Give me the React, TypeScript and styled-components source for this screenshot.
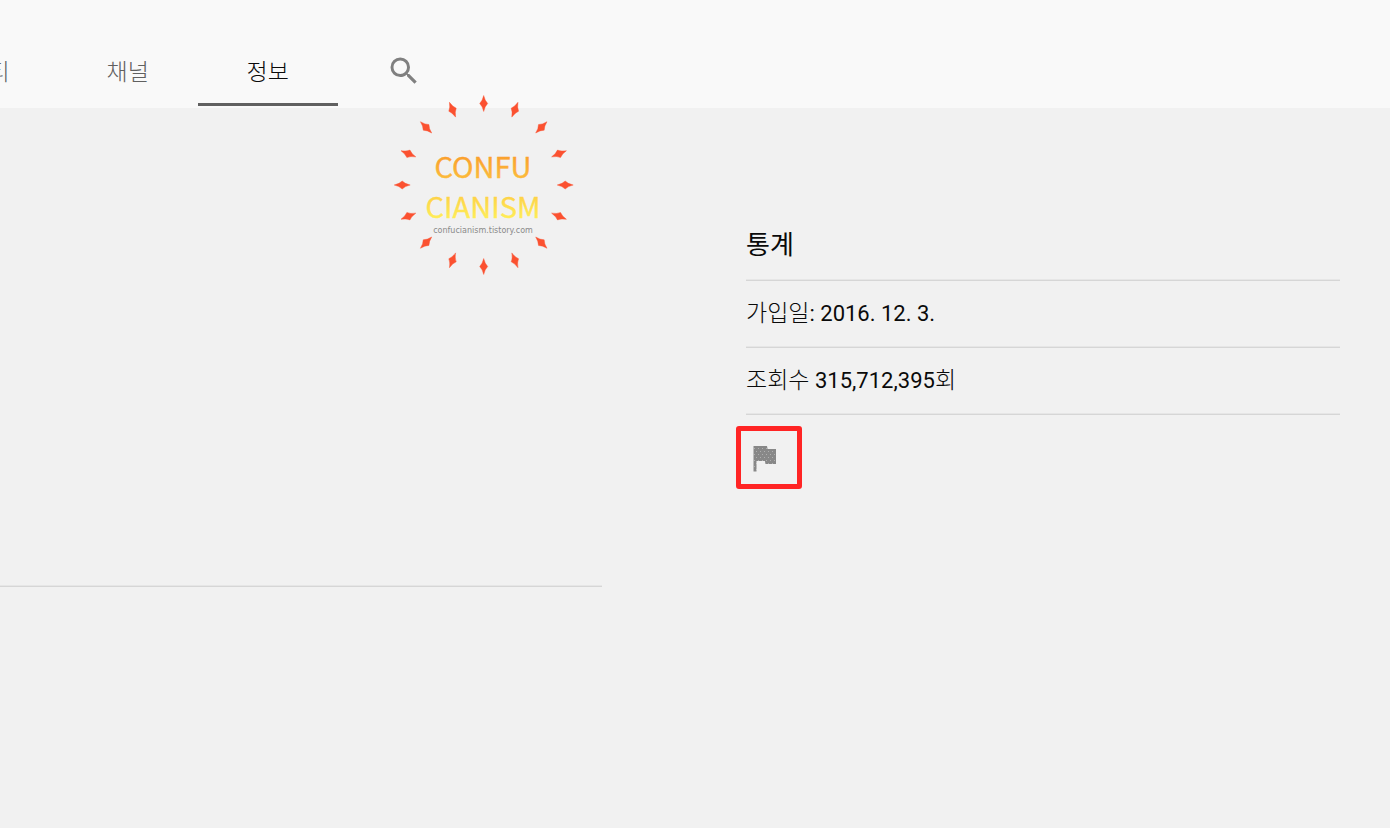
import React from "react";
import styled, { createGlobalStyle } from "styled-components";

const GlobalStyle = createGlobalStyle`
  *, *::before, *::after { box-sizing: border-box; }
  body {
    margin: 0;
    background: #f1f1f1;
    color: #0a0a0a;
    font-family: Roboto, "Noto Sans CJK KR", sans-serif;
    overflow-x: hidden;
  }
`;

const Page = styled.div`
  position: relative;
  min-height: 100vh;
  overflow: hidden;
`;

const TabBar = styled.nav`
  display: flex;
  align-items: flex-end;
  height: 108px;
  padding-bottom: 2px;
  margin-left: -123px;
  background: #f9f9f9;
`;

const Tab = styled.a<{ $active?: boolean }>`
  display: flex;
  align-items: center;
  justify-content: center;
  height: 72px;
  min-width: 140px;
  padding: 8px 48px 0;
  border-bottom: 3px solid ${(p) => (p.$active ? "#606060" : "transparent")};
  color: ${(p) => (p.$active ? "#0a0a0a" : "#606060")};
  font-size: 23px;
  font-weight: 300;
  line-height: 32px;
  text-decoration: none;
  white-space: nowrap;
`;

const IconButton = styled.button`
  display: flex;
  align-items: center;
  justify-content: center;
  width: 36px;
  height: 36px;
  padding: 0;
  border: 0;
  background: none;
  color: #808080;
  cursor: pointer;
`;

const SearchButton = styled(IconButton)`
  margin: 0 0 17px 48px;
`;

const Content = styled.main`
  display: grid;
  grid-template-columns: 602fr 594fr;
  column-gap: 144px;
  padding-right: 50px;
`;

const Description = styled.section`
  height: 479px;
  border-bottom: 1px solid #d6d6d6;
  box-shadow: inset 0 -1px #e6e6e6;
`;

const Stats = styled.aside`
  padding-top: 106px;
`;

const StatsTitle = styled.h2`
  margin: 0;
  padding: 13px 0 17px;
  border-bottom: 1px solid #d6d6d6;
  box-shadow: inset 0 -1px #e6e6e6;
  font-size: 26px;
  font-weight: 400;
  line-height: 36px;
`;

const StatRow = styled.p`
  margin: 0;
  padding: 17px 0;
  border-bottom: 1px solid #d6d6d6;
  box-shadow: inset 0 -1px #e6e6e6;
  font-size: 22px;
  line-height: 32px;
`;

const Hangul = styled.span`
  font-size: 23px;
  font-weight: 300;
  line-height: 1;
`;

const Actions = styled.div`
  display: flex;
  padding-top: 25px;
`;

const FlagHolder = styled.div`
  position: relative;
`;

const Highlight = styled.div`
  position: absolute;
  left: -10px;
  top: -14px;
  width: 66px;
  height: 63px;
  border: 5px solid #ff2424;
  border-radius: 3px;
  pointer-events: none;
`;

const Watermark = styled.svg`
  position: absolute;
  left: 394px;
  top: 95px;
  width: 180px;
  height: 180px;
  pointer-events: none;
`;

const RAYS = Array.from({ length: 16 }, (_, i) => i * 22.5);

function Logo() {
  return (
    <Watermark viewBox="0 0 180 180" aria-label="Confucianism">
      <defs>
        <linearGradient id="sun" gradientUnits="userSpaceOnUse" x1="0" y1="60" x2="0" y2="124">
          <stop offset="0" stopColor="#fa9e2c" />
          <stop offset="1" stopColor="#ffee58" />
        </linearGradient>
      </defs>
      {RAYS.map((a) => (
        <path
          key={a}
          transform={`rotate(${a} 89.7 90)`}
          d="M89.7 0.5Q90.9 5.8 93.7 8.5Q90.9 11.2 89.7 16.5Q88.5 11.2 85.7 8.5Q88.5 5.8 89.7 0.5Z"
          fill="#fb5130"
          stroke="#fb5130"
          strokeWidth="0.4"
        />
      ))}
      <g textAnchor="middle" fontFamily='"Noto Sans CJK KR", sans-serif'>
        <text x="89" y="83" fontSize="29" fill="url(#sun)" stroke="url(#sun)" strokeWidth="0.4">CONFU</text>
        <text x="89" y="123" fontSize="29" fill="url(#sun)" stroke="url(#sun)" strokeWidth="0.4">CIANISM</text>
        <text x="89" y="138" fontSize="8" fontFamily='"DejaVu Sans", sans-serif' fill="#8a8a8a">confucianism.tistory.com</text>
      </g>
    </Watermark>
  );
}

export default function App() {
  return (
    <>
      <GlobalStyle />
      <Page>
        <TabBar>
          <Tab href="#community">커뮤니티</Tab>
          <Tab href="#channels">채널</Tab>
          <Tab href="#about" $active aria-current="page">정보</Tab>
          <SearchButton aria-label="검색">
            <svg width="36" height="36" viewBox="0 0 24 24" fill="currentColor">
              <path d="M15.5 14h-.79l-.28-.27A6.47 6.47 0 0 0 16 9.5 6.5 6.5 0 1 0 9.5 16c1.61 0 3.09-.59 4.23-1.57l.27.28v.79l5 4.99L20.49 19l-4.99-5zm-6 0C7.01 14 5 11.99 5 9.5S7.01 5 9.5 5 14 7.01 14 9.5 11.99 14 9.5 14z" />
            </svg>
          </SearchButton>
        </TabBar>
        <Content>
          <Description />
          <Stats>
            <StatsTitle>통계</StatsTitle>
            <StatRow><Hangul>가입일</Hangul>: 2016. 12. 3.</StatRow>
            <StatRow><Hangul>조회수</Hangul> 315,712,395<Hangul>회</Hangul></StatRow>
            <Actions>
              <FlagHolder>
                <IconButton aria-label="신고">
                  <svg width="36" height="36" viewBox="0 0 36 36">
                    <defs>
                      <pattern id="speckle" width="4" height="6" patternUnits="userSpaceOnUse">
                        <rect width="4" height="6" fill="#888" />
                        <rect x="0" y="2" width="1" height="1" fill="#b0b0b0" />
                        <rect x="2" y="5" width="1" height="1" fill="#b0b0b0" />
                      </pattern>
                    </defs>
                    <path d="M21.6 9L21 6H7.5v25.5h3v-10.5h8.4l.6 3H30V9z" fill="url(#speckle)" />
                  </svg>
                </IconButton>
                <Highlight />
              </FlagHolder>
            </Actions>
          </Stats>
        </Content>
        <Logo />
      </Page>
    </>
  );
}
